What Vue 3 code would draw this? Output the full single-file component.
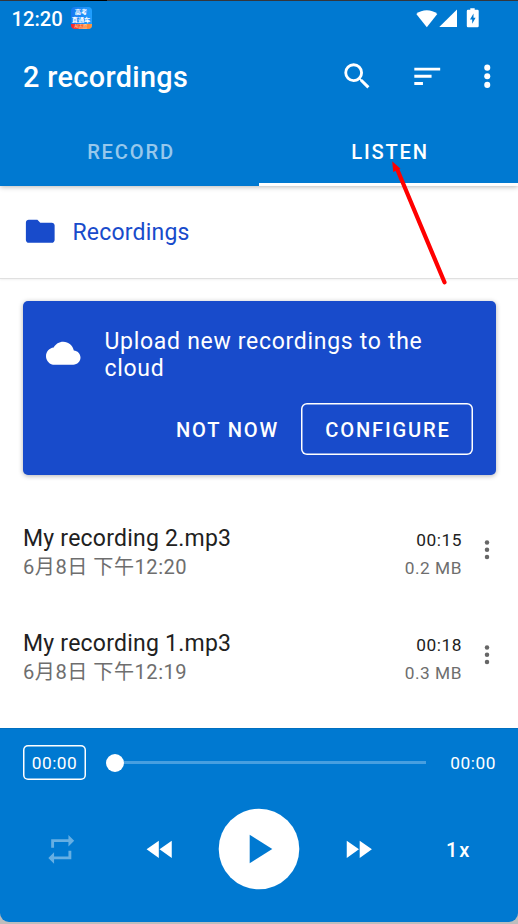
<script setup>
const recordings = [
  { name: 'My recording 2.mp3', date: '6月8日 下午12:20', length: '00:15', size: '0.2 MB' },
  { name: 'My recording 1.mp3', date: '6月8日 下午12:19', length: '00:18', size: '0.3 MB' },
]
</script>

<template>
  <div class="screen">
    <div class="top-edge"><span class="notch"></span></div>
    <header class="header">
      <div class="status">
        <span class="clock">12:20</span>
        <div class="app-badge">
          <span class="badge-line">高考</span>
          <span class="badge-line">直通车</span>
          <span class="badge-foot">AI志愿</span>
        </div>
        <svg class="signals" viewBox="0 0 66 22">
          <path d="M0.3 6 C6 1 15.500 1 21.300 6 L10.800 19.300Z" />
          <path d="M23.500 19V18.700L41 1.500V19Z" />
          <path fill-rule="evenodd" d="M54.300 0.300h4.400v1.500h2.800q1.200 0 1.200 1.200v15q0 1.200-1.200 1.200h-9.500q-1.200 0-1.200-1.200V3q0-1.200 1.200-1.200h2.300z M57.500 5.400l-3.500 6.200h2.200v4.200l3.400-6.100h-2.100z" />
        </svg>
      </div>
      <div class="toolbar">
        <h1>2 recordings</h1>
        <svg class="ico search" viewBox="0 0 24 24"><path d="M15.500 14h-.79l-.28-.27A6.471 6.471 0 0 0 16 9.500 6.500 6.500 0 1 0 9.500 16c1.610 0 3.090-.59 4.230-1.570l.27.28v.79l5 4.990L20.490 19l-4.990-5zm-6 0C7.010 14 5 11.990 5 9.500S7.010 5 9.500 5 14 7.010 14 9.500 11.990 14 9.500 14z" /></svg>
        <svg class="ico sort" viewBox="0 0 24 24"><path d="M3 18h6v-2H3v2zM3 6v2h18V6H3zm0 7h12v-2H3v2z" /></svg>
        <svg class="ico more" viewBox="0 0 24 24"><circle cx="12" cy="6" r="2.100" /><circle cx="12" cy="12" r="2.100" /><circle cx="12" cy="18" r="2.100" /></svg>
      </div>
      <nav class="tabs">
        <div class="tab">RECORD</div>
        <div class="tab active">LISTEN</div>
      </nav>
    </header>

    <div class="folder">
      <svg class="ico" viewBox="0 0 24 24"><path d="M10 4H4c-1.100 0-1.990.9-1.990 2L2 18c0 1.100.9 2 2 2h16c1.100 0 2-.9 2-2V8c0-1.100-.9-2-2-2h-8l-2-2z" /></svg>
      <span>Recordings</span>
    </div>

    <section class="card">
      <div class="card-body">
        <svg class="ico" viewBox="0 0 24 24"><path d="M19.350 10.040C18.670 6.590 15.640 4 12 4 9.110 4 6.600 5.640 5.350 8.040 2.340 8.360 0 10.910 0 14c0 3.310 2.690 6 6 6h13c2.760 0 5-2.240 5-5 0-2.640-2.050-4.780-4.650-4.960z" /></svg>
        <p>Upload new recordings to the cloud</p>
      </div>
      <div class="card-actions">
        <button class="flat">NOT NOW</button>
        <button class="outlined">CONFIGURE</button>
      </div>
    </section>

    <main class="list">
      <div v-for="item in recordings" :key="item.name" class="row">
        <div class="info">
          <div class="name">{{ item.name }}</div>
          <div class="date">{{ item.date }}</div>
        </div>
        <div class="meta">
          <div class="length">{{ item.length }}</div>
          <div class="size">{{ item.size }}</div>
        </div>
        <svg class="row-more" viewBox="0 0 6 22"><circle cx="3" cy="3.500" r="2.250" /><circle cx="3" cy="10.800" r="2.250" /><circle cx="3" cy="18.100" r="2.250" /></svg>
      </div>
    </main>

    <footer class="player-wrap">
      <div class="player">
        <div class="progress">
          <span class="position">00:00</span>
          <div class="track"><span class="thumb"></span><span class="line"></span></div>
          <span class="total">00:00</span>
        </div>
        <div class="controls">
          <svg class="ico repeat" viewBox="0 0 24 24"><path d="M7 7h10v3l4-4-4-4v3H5v6h2V7zm10 10H7v-3l-4 4 4 4v-3h12v-6h-2v4z" /></svg>
          <svg class="ico rewind" viewBox="0 0 24 24"><path d="M11 18V6l-8.500 6 8.500 6zm.5-6l8.500 6V6l-8.500 6z" /></svg>
          <svg class="play" viewBox="0 0 82 82">
            <circle cx="41" cy="41" r="40.300" fill="#fff" />
            <path d="M31.700 26.700v28.600L54.300 41z" />
          </svg>
          <svg class="ico forward" viewBox="0 0 24 24"><path d="M4 18l8.500-6L4 6v12zm9-12v12l8.500-6L13 6z" /></svg>
          <span class="speed">1x</span>
        </div>
      </div>
    </footer>

    <svg class="arrow" viewBox="0 0 60 130">
      <path class="shaft" d="M9.500 12L56.500 124.300" />
      <path class="head" d="M4.200 3.200L5.200 14L12.500 10.800Z" />
    </svg>
  </div>
</template>

<style>
body { margin: 0; }
</style>

<style scoped>
* { box-sizing: border-box; }
.screen {
  position: relative;
  width: 518px;
  height: 924px;
  overflow: hidden;
  display: flex;
  flex-direction: column;
  background: #fff;
  font-family: Roboto, "Noto Sans CJK SC", sans-serif;
  color: #212121;
}
.top-edge { height: 1px; flex: none; background: #393b42; display: flex; padding-left: 50px; }
.notch { width: 57px; background: #000; }
.header {
  height: 185px;
  flex: none;
  background: #0079d1;
  color: #fff;
  box-shadow: 0 1px 5px rgba(0, 0, 0, 0.28);
  display: flex;
  flex-direction: column;
}
svg { fill: currentColor; display: block; flex: none; }
.ico { width: 34.500px; height: 34.500px; }
.status { height: 37px; display: flex; align-items: flex-start; padding: 6px 36px 0 11.500px; }
.clock { font-size: 20.200px; line-height: 25px; font-weight: 500; width: 59px; white-space: nowrap; }
.app-badge {
  width: 21px;
  height: 22px;
  border-radius: 4px;
  overflow: hidden;
  background: linear-gradient(90deg, #1677f0, #20a0ff);
  display: flex;
  flex-direction: column;
  align-items: center;
  padding-top: 1px;
  font-family: "Noto Sans CJK SC", sans-serif;
}
.badge-line { font-size: 6.200px; line-height: 8px; font-weight: 700; height: 8px; white-space: nowrap; }
.badge-foot {
  width: 100%;
  height: 5px;
  font-size: 4.500px;
  line-height: 5px;
  text-align: center;
  color: #ffe7b0;
  background: linear-gradient(90deg, #f5222d, #ff9c3d);
}
.signals { width: 66px; height: 22px; margin-left: auto; margin-top: 1px; }
.toolbar { height: 78px; display: flex; align-items: center; padding: 0 14px 0 23px; }
.toolbar .ico { margin-bottom: 2px; }
h1 { margin: 0; font-size: 28.800px; font-weight: 500; line-height: 34px; flex: 1; letter-spacing: 0.360px; }
.sort { margin-left: 35.500px; }
.more { margin-left: 25.500px; }
.tabs { height: 70px; display: flex; }
.tab {
  flex: 1;
  text-align: center;
  padding: 24px 0 0 3px;
  font-size: 20.150px;
  line-height: 24px;
  font-weight: 500;
  letter-spacing: 1.800px;
  color: rgba(255, 255, 255, 0.6);
}
.tab.active { color: #fff; border-bottom: 3px solid #fff; }
.folder {
  height: 93px;
  flex: none;
  display: flex;
  align-items: center;
  padding: 0 23px;
  gap: 15px;
  color: #184bcb;
  font-size: 23px;
  letter-spacing: 0.200px;
  border-bottom: 1px solid #e0e0e0;
  box-shadow: 0 1px 2px rgba(0, 0, 0, 0.06);
}
.folder .ico { margin-top: -1px; }
.folder span { padding-top: 1px; }
.card {
  flex: none;
  margin: 22px 22px 0 23px;
  height: 174px;
  border-radius: 5px;
  background: #184bcb;
  color: #fff;
  box-shadow: 0 1px 5px rgba(0, 0, 0, 0.3);
  padding: 27px 23px 0;
}
.card-body { display: flex; height: 75px; gap: 24px; }
.card-body .ico { margin-top: 8px; }
.card p { margin: 0; font-size: 23px; line-height: 27px; letter-spacing: 0.700px; }
.card-actions { display: flex; justify-content: flex-end; gap: 22px; }
button { border: 0; background: none; color: inherit; font: inherit; padding: 0; }
.flat, .outlined { font-size: 20.150px; font-weight: 500; letter-spacing: 1.800px; height: 52px; padding-top: 1px; }
.outlined { width: 172px; box-shadow: inset 0 0 0 1.500px #fff; border-radius: 6px; padding-left: 2px; }
.list { padding-top: 24px; flex: 1; }
.row { height: 105px; display: flex; padding: 0 28px 0 23px; }
.info { flex: 1; padding-top: 26px; }
.name { font-size: 23px; line-height: 28px; letter-spacing: 0.230px; }
.date { font-size: 20.150px; line-height: 29px; color: #6e6e6e; letter-spacing: 0.480px; }
.meta { text-align: right; font-size: 17.300px; letter-spacing: 0.540px; padding-top: 27px; line-height: 28px; }
.size { color: #6e6e6e; }
.row-more { width: 6px; height: 22px; margin: 40px 0 0 22px; color: #666; }
.player-wrap { flex: none; height: 196px; background: linear-gradient(#0079d1 50%, #bdbdbd 50%); }
.player {
  height: 194px;
  background: #0079d1;
  color: #fff;
  border-radius: 0 0 9px 9px;
  border-top: 1px solid #006fc0;
  padding: 16px 22px 0 23px;
}
.progress { display: flex; align-items: center; height: 35px; font-size: 17.300px; letter-spacing: 0.540px; }
.position { width: 63px; height: 35px; line-height: 37px; box-shadow: inset 0 0 0 1.500px #fff; border-radius: 5px; text-align: center; }
.track { width: 320px; margin-left: 20px; display: flex; align-items: center; }
.thumb { width: 18px; height: 18px; border-radius: 50%; background: #fff; }
.line { flex: 1; height: 3px; background: #479fe0; }
.total { margin-left: auto; padding-top: 1px; }
.controls { display: flex; align-items: center; height: 82px; margin-top: 28px; }
.repeat { margin-left: 21px; color: #66afe3; }
.rewind { margin-left: 64px; }
.play { width: 82px; height: 82px; margin-left: 41px; color: #0079d1; }
.forward { margin-left: 41px; }
.speed { font-size: 20.150px; font-weight: 500; letter-spacing: 1.800px; margin-left: 70.500px; padding-top: 1px; }
.arrow { position: absolute; left: 388px; top: 158px; width: 60px; height: 130px; }
.shaft { stroke: #f00; stroke-width: 4.200; stroke-linecap: round; }
.head { fill: #f00; }
</style>
